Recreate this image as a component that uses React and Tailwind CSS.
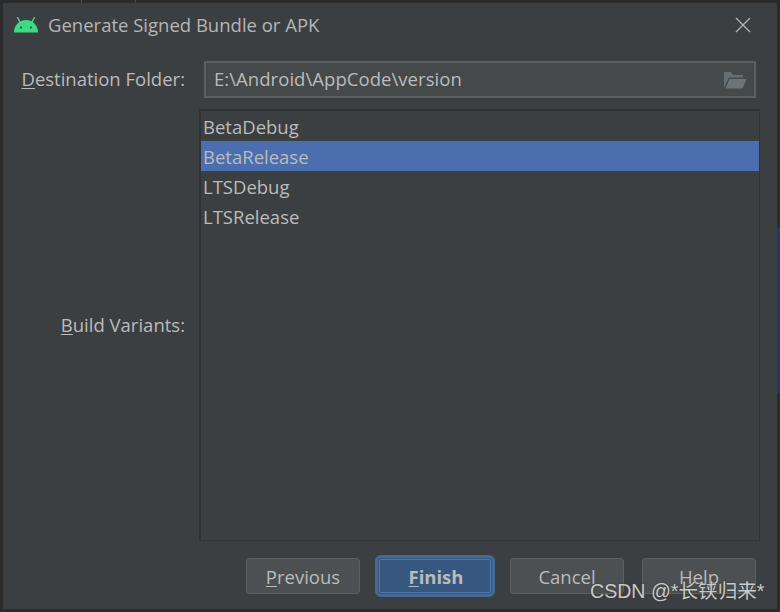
const FONT = "font-['Open_Sans','Noto_Sans',sans-serif]";

function AndroidIcon() {
  return (
    <svg width="24" height="16" viewBox="0 0 24 16" fill="none">
      <path d="M0 15.5C0 8.5 5 3 12 3C19 3 24 8.5 24 15.5H0Z" fill="#3ddc84" />
      <path d="M6 5L3.6 0.6M18 5L20.4 0.6" stroke="#3ddc84" strokeWidth="1.4" strokeLinecap="round" />
      <circle cx="7" cy="10.5" r="1.1" fill="#3c3f41" />
      <circle cx="17" cy="10.5" r="1.1" fill="#3c3f41" />
    </svg>
  );
}

function CloseIcon() {
  return (
    <svg width="16" height="16" viewBox="0 0 16 16" fill="none">
      <path d="M1 1L15 15M15 1L1 15" stroke="#afb1b3" strokeWidth="1.4" />
    </svg>
  );
}

function FolderIcon() {
  return (
    <svg width="24" height="18" viewBox="0 0 24 18" fill="none">
      <path d="M1 17V1H8L10 4H20V6.5H6L1 17Z" fill="#656e72" />
      <path d="M6.5 8H23.5L19.5 17.5H2.5L6.5 8Z" fill="#6c7478" />
    </svg>
  );
}

function Button({ children }) {
  return (
    <button className="w-[114px] h-[36px] pt-[2px] rounded-[4px] border border-[#5e6060] bg-[#4c5052] text-[#bbbbbb] text-[18.5px]">
      {children}
    </button>
  );
}

export default function App() {
  const variants = ["BetaDebug", "BetaRelease", "LTSDebug", "LTSRelease"];

  return (
    <div className={`relative w-[780px] h-[612px] overflow-hidden bg-[#2b2b2b] px-[3px] pt-[3px] ${FONT}`}>
      {/* Bits of the IDE showing behind the dialog */}
      <div className="absolute right-0 top-[228px] w-[3px] h-[165px] bg-[#1c3a70]" />
      <div className="absolute left-[81px] top-0 w-[1px] h-[3px] bg-[#4a4a4a]" />
      <div className="absolute left-[135px] top-0 w-[1px] h-[3px] bg-[#4a4a4a]" />

      <div className="relative h-[606px] bg-[#3c3f41] flex flex-col text-[#bbbbbb]">
        {/* Title bar */}
        <div className="h-[44px] flex items-center shrink-0">
          <div className="ml-[11px] flex">
            <AndroidIcon />
          </div>
          <span className="ml-[10px] text-[18.5px] text-[#b4b6b8]">Generate Signed Bundle or APK</span>
          <div className="ml-auto mr-[26px] flex">
            <CloseIcon />
          </div>
        </div>

        {/* Destination folder */}
        <div className="mt-[14px] flex items-center shrink-0">
          <label className="w-[182px] pb-[2px] text-right text-[18.5px]">
            <u className="underline-offset-2">D</u>estination Folder:
          </label>
          <div className="ml-[19px] w-[552px] h-[37px] border-2 border-[#5c6060] bg-[#45494a] flex items-center pl-[8px] pr-[7px]">
            <span className="pb-[2px] text-[18.5px] tracking-[0.05px]">E:\Android\AppCode\version</span>
            <div className="ml-auto flex">
              <FolderIcon />
            </div>
          </div>
        </div>

        {/* Build variants */}
        <div className="mt-[11px] flex items-center shrink-0">
          <label className="w-[182px] text-right text-[18.5px]">
            <u className="underline-offset-2">B</u>uild Variants:
          </label>
          <div className="ml-[14px] w-[561px] h-[432px] border-2 border-b border-r border-[#323232]">
            {variants.map((name) => (
              <div
                key={name}
                className={`h-[30px] pl-[2px] pt-[2px] flex items-center text-[18.5px] ${name === "BetaRelease" ? "bg-[#4b6eaf]" : ""}`}
              >
                {name}
              </div>
            ))}
          </div>
        </div>

        {/* Footer buttons */}
        <div className="mt-[14px] flex items-center shrink-0 pl-[243px]">
          <Button>
            <u className="underline-offset-2">P</u>revious
          </Button>
          <button className="ml-[15px] w-[120px] h-[42px] pt-[2px] pl-[2px] rounded-[6px] border-[3px] border-[#446a95] bg-[#365880] text-[#bbbbbb] text-[18.5px] font-bold outline outline-1 -outline-offset-[5px] outline-[#4f79a6]">
            <u className="underline-offset-2">F</u>inish
          </button>
          <div className="ml-[15px] flex gap-[18px]">
            <Button>Cancel</Button>
            <Button>Help</Button>
          </div>
        </div>
      </div>

      {/* Watermark */}
      <span className="absolute left-[590px] top-[577px] text-[19.6px] text-[#c9c9c9] whitespace-nowrap font-['Liberation_Sans','Noto_Sans_CJK_SC',sans-serif] [text-shadow:0_0_2px_#333]">
        CSDN @*长铗归来*
      </span>
    </div>
  );
}
